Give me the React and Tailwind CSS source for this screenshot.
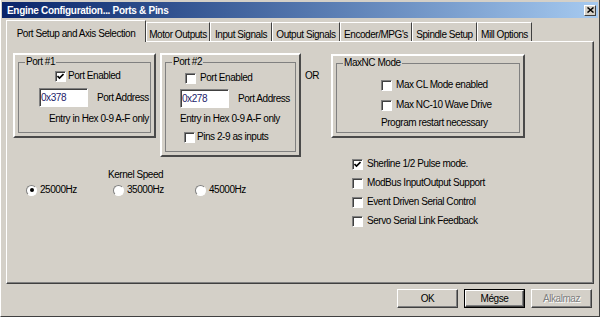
import React from 'react'

function Check({ checked }) {
  return (
    <span className="flex h-[11px] w-[11px] shrink-0 items-center justify-center border border-t-[#808080] border-l-[#808080] border-r-white border-b-white bg-white shadow-[inset_1px_1px_0_#404040]">
      {checked ? (
        <svg width="7" height="7" viewBox="0 0 7 7">
          <path d="M0.5 3 L2.5 5 L6.5 1" stroke="#000" strokeWidth="1.6" fill="none" />
        </svg>
      ) : null}
    </span>
  )
}

function CheckRow({ checked, label, className = '', gap = 'gap-[4px]' }) {
  return (
    <div className={`flex h-[12px] items-center ${gap} ${className}`}>
      <Check checked={checked} />
      <span className="leading-[12px]">{label}</span>
    </div>
  )
}

function Radio({ checked, label }) {
  return (
    <div className="flex h-[12px] items-center gap-[3px]">
      <span className="flex h-[11px] w-[11px] shrink-0 items-center justify-center rounded-full border border-t-[#808080] border-l-[#808080] border-r-white border-b-white bg-white">
        {checked ? <span className="h-[4px] w-[4px] rounded-full bg-black" /> : null}
      </span>
      <span className="leading-[12px]">{label}</span>
    </div>
  )
}

function HexInput({ value }) {
  return (
    <div className="flex h-[19px] w-[49px] items-center border border-t-[#808080] border-l-[#808080] border-r-white border-b-white bg-white pl-[1px] text-[#22226a] shadow-[inset_1px_1px_0_#404040]">
      {value}
    </div>
  )
}

function Frame({ title, className, children }) {
  return (
    <div className={`flex shrink-0 flex-col border-2 border-t-white border-l-white border-r-[#4a4a4a] border-b-[#4a4a4a] px-[3px] pb-[3px] pt-px ${className}`}>
      <fieldset className="flex-1 border border-[#808080]">
        <legend className="ml-[6px] px-px leading-[12px]">{title}</legend>
        {children}
      </fieldset>
    </div>
  )
}

function Tab({ label, width, active }) {
  if (active) {
    return (
      <div className={`relative z-10 -mb-px flex h-[22px] items-start justify-center border-l border-t border-r border-t-white border-l-white border-r-[#404040] bg-[#d4d0c8] pt-[5px] ${width}`}>
        {label}
      </div>
    )
  }
  return (
    <div className={`flex h-[19px] items-start justify-center border-l border-t border-r border-t-white border-l-white border-r-[#404040] pt-[4px] ${width}`}>
      {label}
    </div>
  )
}

function Button({ label, primary, disabled }) {
  return (
    <div className={`flex h-[19px] w-[61px] items-center justify-center ${primary ? 'border border-black' : ''}`}>
      <div className="flex h-full w-full items-center justify-center border border-t-white border-l-white border-r-[#404040] border-b-[#404040] shadow-[inset_-1px_-1px_0_#808080]">
        <span className={disabled ? 'text-[#808080] [text-shadow:1px_1px_0_#fff]' : ''}>{label}</span>
      </div>
    </div>
  )
}

export default function App() {
  const tabs = [
    ['Motor Outputs', 'w-[64px]'],
    ['Input Signals', 'w-[62px]'],
    ['Output Signals', 'w-[68px]'],
    ["Encoder/MPG's", 'w-[72px]'],
    ['Spindle Setup', 'w-[65px]'],
    ['Mill Options', 'w-[55px]'],
  ]

  return (
    <div className="flex h-[317px] w-[600px] flex-col overflow-hidden border-l border-r border-b border-l-white border-r-[#404040] border-b-[#404040] bg-[#d4d0c8] font-['Liberation_Sans',Arial,sans-serif] text-[10px] tracking-[-0.45px] text-black">
      {/* title bar */}
      <div className="mx-[1px] mt-[2px] flex h-[16px] items-center justify-between bg-gradient-to-r from-[#0a246a] to-[#a6caf0] pl-[5px] pr-[2px]">
        <span className="text-[10px] font-bold tracking-[-0.3px] text-white">Engine Configuration... Ports &amp; Pins</span>
        <div className="flex h-[11px] w-[12px] items-center justify-center border border-t-white border-l-white border-r-[#404040] border-b-[#404040] bg-[#d4d0c8]">
          <svg width="7" height="6" viewBox="0 0 7 6">
            <path d="M0.5 0.5 L6.5 5.5 M6.5 0.5 L0.5 5.5" stroke="#000" strokeWidth="1.5" />
          </svg>
        </div>
      </div>

      {/* tabs */}
      <div className="ml-[5px] mt-[2px] flex h-[21px] items-end">
        <Tab label="Port Setup and Axis Selection" width="w-[140px]" active />
        {tabs.map(([label, width]) => (
          <Tab key={label} label={label} width={width} />
        ))}
      </div>

      {/* tab panel */}
      <div className="mx-[5px] h-[243px] w-[588px] border border-t-white border-l-white border-r-[#404040] border-b-[#404040] shadow-[inset_-1px_-1px_0_#808080]">
        <div className="flex items-start pl-[6px] pt-[11px]">
          <Frame title="Port #1" className="h-[85px] w-[143px]">
            <CheckRow checked label="Port Enabled" className="ml-[36px] mt-[2px]" gap="gap-[2px]" />
            <div className="ml-[20px] mt-[6px] flex items-center gap-[9px]">
              <HexInput value="0x378" />
              <span>Port Address</span>
            </div>
            <div className="ml-[30px] mt-[6px] leading-[12px]">Entry in Hex 0-9 A-F only</div>
          </Frame>

          <Frame title="Port #2" className="ml-[4px] h-[104px] w-[141px]">
            <CheckRow label="Port Enabled" className="ml-[19px] mt-[4px]" />
            <div className="ml-[14px] mt-[5px] flex items-center gap-[9px]">
              <HexInput value="0x278" />
              <span>Port Address</span>
            </div>
            <div className="ml-[14px] mt-[5px] leading-[12px]">Entry in Hex 0-9 A-F only</div>
            <CheckRow label="Pins 2-9 as inputs" className="ml-[18px] mt-[6px]" gap="gap-[2px]" />
          </Frame>

          <div className="ml-[4px] mt-[17px] w-[26px] leading-[12px]">OR</div>

          <Frame title="MaxNC Mode" className="mt-px h-[84px] w-[194px]">
            <CheckRow label="Max CL Mode enabled" className="ml-[44px] mt-[10px]" />
            <CheckRow label="Max NC-10 Wave Drive" className="ml-[44px] mt-[8px]" />
            <div className="ml-[44px] mt-[6px] leading-[12px]">Program restart necessary</div>
          </Frame>
        </div>

        <div className="flex pl-[6px]">
          <div className="mt-[12px] w-[339px]">
            <div className="pl-[95px] leading-[12px]">Kernel Speed</div>
            <div className="mt-[3px] flex pl-[13px]">
              <div className="w-[87px]">
                <Radio checked label="25000Hz" />
              </div>
              <div className="w-[82px]">
                <Radio label="35000Hz" />
              </div>
              <Radio label="45000Hz" />
            </div>
          </div>
          <div className="mt-px flex flex-col gap-[7px]">
            <CheckRow checked label="Sherline 1/2 Pulse mode." />
            <CheckRow label="ModBus InputOutput Support" />
            <CheckRow label="Event Driven Serial Control" />
            <CheckRow label="Servo Serial Link Feedback" />
          </div>
        </div>
      </div>

      {/* buttons */}
      <div className="mt-[5px] flex justify-end gap-[6px] pr-[7px]">
        <Button label="OK" />
        <Button label="Mégse" primary />
        <Button label="Alkalmaz" disabled />
      </div>
    </div>
  )
}
